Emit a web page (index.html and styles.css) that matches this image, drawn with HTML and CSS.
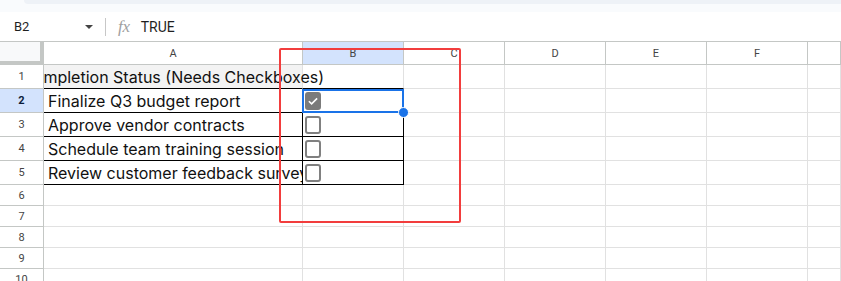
FILE: index.html
```html
<!DOCTYPE html>
<html lang="en">
<head>
  <meta charset="UTF-8">
  <title>Sheet - Checkboxes</title>
  <link rel="stylesheet" href="styles.css">
</head>
<body>
  <div class="top-strip"><div class="top-tab"></div></div>

  <div class="formula-bar">
    <div class="name-box">B2</div>
    <div class="name-arrow"></div>
    <div class="fb-divider"></div>
    <div class="fx">fx</div>
    <div class="fb-value">TRUE</div>
  </div>

  <div class="sheet">
    <!-- column headers -->
    <div class="row head-row">
      <div class="rh corner"></div>
      <div class="cells">
        <div class="ch col-a">A</div>
        <div class="ch col-b sel">B</div>
        <div class="ch col-c">C</div>
        <div class="ch col-c">D</div>
        <div class="ch col-c">E</div>
        <div class="ch col-c">F</div>
        <div class="ch col-rest"></div>
      </div>
    </div>

    <div class="row tall">
      <div class="rh">1</div>
      <div class="cells">
        <div class="c col-a title bb"><span>Completion Status (Needs Checkboxes)</span></div>
        <div class="c col-b bb"></div>
        <div class="c col-c"></div><div class="c col-c"></div><div class="c col-c"></div><div class="c col-c"></div>
        <div class="c col-rest"></div>
      </div>
    </div>

    <div class="row tall">
      <div class="rh sel">2</div>
      <div class="cells">
        <div class="c col-a bd">Finalize Q3 budget report</div>
        <div class="c col-b bd">
          <span class="box checked">
            <svg viewBox="0 0 14 14" width="14" height="14"><path d="M2.2 7.3l3.2 3.1 6.4-6.4" fill="none" stroke="#fff" stroke-width="1.9"/></svg>
          </span>
        </div>
        <div class="c col-c"></div><div class="c col-c"></div><div class="c col-c"></div><div class="c col-c"></div>
        <div class="c col-rest"></div>
      </div>
    </div>

    <div class="row tall">
      <div class="rh">3</div>
      <div class="cells">
        <div class="c col-a bd">Approve vendor contracts</div>
        <div class="c col-b bd"><span class="box"></span></div>
        <div class="c col-c"></div><div class="c col-c"></div><div class="c col-c"></div><div class="c col-c"></div>
        <div class="c col-rest"></div>
      </div>
    </div>

    <div class="row tall">
      <div class="rh">4</div>
      <div class="cells">
        <div class="c col-a bd">Schedule team training session</div>
        <div class="c col-b bd"><span class="box"></span></div>
        <div class="c col-c"></div><div class="c col-c"></div><div class="c col-c"></div><div class="c col-c"></div>
        <div class="c col-rest"></div>
      </div>
    </div>

    <div class="row tall">
      <div class="rh">5</div>
      <div class="cells">
        <div class="c col-a bd">Review customer feedback survey</div>
        <div class="c col-b bd"><span class="box"></span></div>
        <div class="c col-c"></div><div class="c col-c"></div><div class="c col-c"></div><div class="c col-c"></div>
        <div class="c col-rest"></div>
      </div>
    </div>

    <div class="row">
      <div class="rh">6</div>
      <div class="cells">
        <div class="c col-a"></div><div class="c col-b"></div>
        <div class="c col-c"></div><div class="c col-c"></div><div class="c col-c"></div><div class="c col-c"></div>
        <div class="c col-rest"></div>
      </div>
    </div>
    <div class="row">
      <div class="rh">7</div>
      <div class="cells">
        <div class="c col-a"></div><div class="c col-b"></div>
        <div class="c col-c"></div><div class="c col-c"></div><div class="c col-c"></div><div class="c col-c"></div>
        <div class="c col-rest"></div>
      </div>
    </div>
    <div class="row">
      <div class="rh">8</div>
      <div class="cells">
        <div class="c col-a"></div><div class="c col-b"></div>
        <div class="c col-c"></div><div class="c col-c"></div><div class="c col-c"></div><div class="c col-c"></div>
        <div class="c col-rest"></div>
      </div>
    </div>
    <div class="row">
      <div class="rh">9</div>
      <div class="cells">
        <div class="c col-a"></div><div class="c col-b"></div>
        <div class="c col-c"></div><div class="c col-c"></div><div class="c col-c"></div><div class="c col-c"></div>
        <div class="c col-rest"></div>
      </div>
    </div>
    <div class="row">
      <div class="rh">10</div>
      <div class="cells">
        <div class="c col-a"></div><div class="c col-b"></div>
        <div class="c col-c"></div><div class="c col-c"></div><div class="c col-c"></div><div class="c col-c"></div>
        <div class="c col-rest"></div>
      </div>
    </div>

    <!-- overlays: active cell selection and annotation box -->
    <div class="selection"><div class="handle"></div></div>
    <div class="annotation"></div>
  </div>
</body>
</html>
```

FILE: styles.css
```css
body {
  margin: 0;
  font-family: 'Roboto', 'Liberation Sans', Arial, sans-serif;
  background: #fff;
  color: #1f1f1f;
  overflow: hidden;
}

.top-strip {
  height: 12px;
  background: #f9fbfd;
}

.top-tab {
  height: 4px;
  margin-left: 24px;
  background: #eef2f7;
  border-bottom-left-radius: 8px;
}

.formula-bar {
  height: 29px;
  display: flex;
  align-items: center;
  font-size: 13px;
}

.name-box {
  width: 70px;
  padding-left: 14px;
  color: #1f1f1f;
}

.name-arrow {
  width: 0;
  height: 0;
  border-left: 4px solid transparent;
  border-right: 4px solid transparent;
  border-top: 4px solid #444;
  margin-left: 1px;
}

.fb-divider {
  width: 1px;
  height: 18px;
  background: #c7c7c7;
  margin-left: 12px;
}

.fx {
  font-family: 'Liberation Serif', serif;
  font-style: italic;
  font-size: 17px;
  color: #a0a0a0;
  margin-left: 12px;
  letter-spacing: -0.3px;
}

.fb-value {
  margin-left: 11px;
  font-size: 14px;
  color: #1f1f1f;
}

.sheet {
  position: relative;
  border-top: 1px solid #c4c7c5;
}

.row {
  display: flex;
  height: 21px;
}

.row.tall {
  height: 24px;
}

.head-row {
  height: 23px;
}

.rh {
  width: 44px;
  flex-shrink: 0;
  border-right: 1px solid #c4c7c5;
  border-bottom: 1px solid #c4c7c5;
  box-sizing: border-box;
  font-size: 11px;
  color: #444;
  display: flex;
  align-items: center;
  justify-content: center;
  background: #fff;
}

.rh.sel {
  background: #d3e3fd;
  color: #0b1d3a;
  font-weight: bold;
}

.rh.corner {
  background: #f8f9fa;
  border-right: 4px solid #c4c7c5;
  border-bottom: 4px solid #c4c7c5;
}

.cells {
  display: flex;
  flex: 1;
  overflow: hidden;
}

.ch, .c {
  flex-shrink: 0;
  box-sizing: border-box;
  border-right: 1px solid #e1e1e1;
  border-bottom: 1px solid #e1e1e1;
}

.ch {
  border-right-color: #c4c7c5;
  border-bottom-color: #c4c7c5;
  font-size: 11px;
  color: #444;
  display: flex;
  align-items: center;
  justify-content: center;
}

.ch.sel {
  background: #d3e3fd;
}

.col-a { width: 259px; }
.col-b { width: 101px; }
.col-c { width: 101px; }
.col-rest { flex: 1; }

.c {
  font-family: 'Inter', 'Liberation Sans', sans-serif;
  font-size: 16px;
  color: #111;
  display: flex;
  align-items: center;
  padding-left: 4px;
  white-space: nowrap;
}

.c.title {
  background: #f3f3f3;
  justify-content: flex-end;
  padding-left: 0;
}

.c.title span {
  flex-shrink: 0;
  margin-right: -22px;
}

.c.bb {
  border-bottom-color: #000;
}

.c.bd {
  border-right-color: #000;
  border-bottom-color: #000;
  overflow: hidden;
}

.c.col-b {
  padding-left: 2px;
}

.box {
  width: 12px;
  height: 14px;
  border: 2px solid #808080;
  border-radius: 3px;
  display: flex;
  align-items: center;
  justify-content: center;
}

.box.checked {
  background: #7b7b7b;
  border-color: #7b7b7b;
}

.selection {
  position: absolute;
  left: 302px;
  top: 47px;
  width: 98px;
  height: 20px;
  border: 2px solid #1a73e8;
}

.handle {
  position: absolute;
  right: -7px;
  bottom: -7px;
  width: 9px;
  height: 9px;
  border-radius: 50%;
  background: #1a73e8;
  border: 1px solid #fff;
}

.annotation {
  position: absolute;
  left: 279px;
  top: 6px;
  width: 178px;
  height: 171px;
  border: 2px solid #f23d3d;
  border-radius: 2px;
}
```
